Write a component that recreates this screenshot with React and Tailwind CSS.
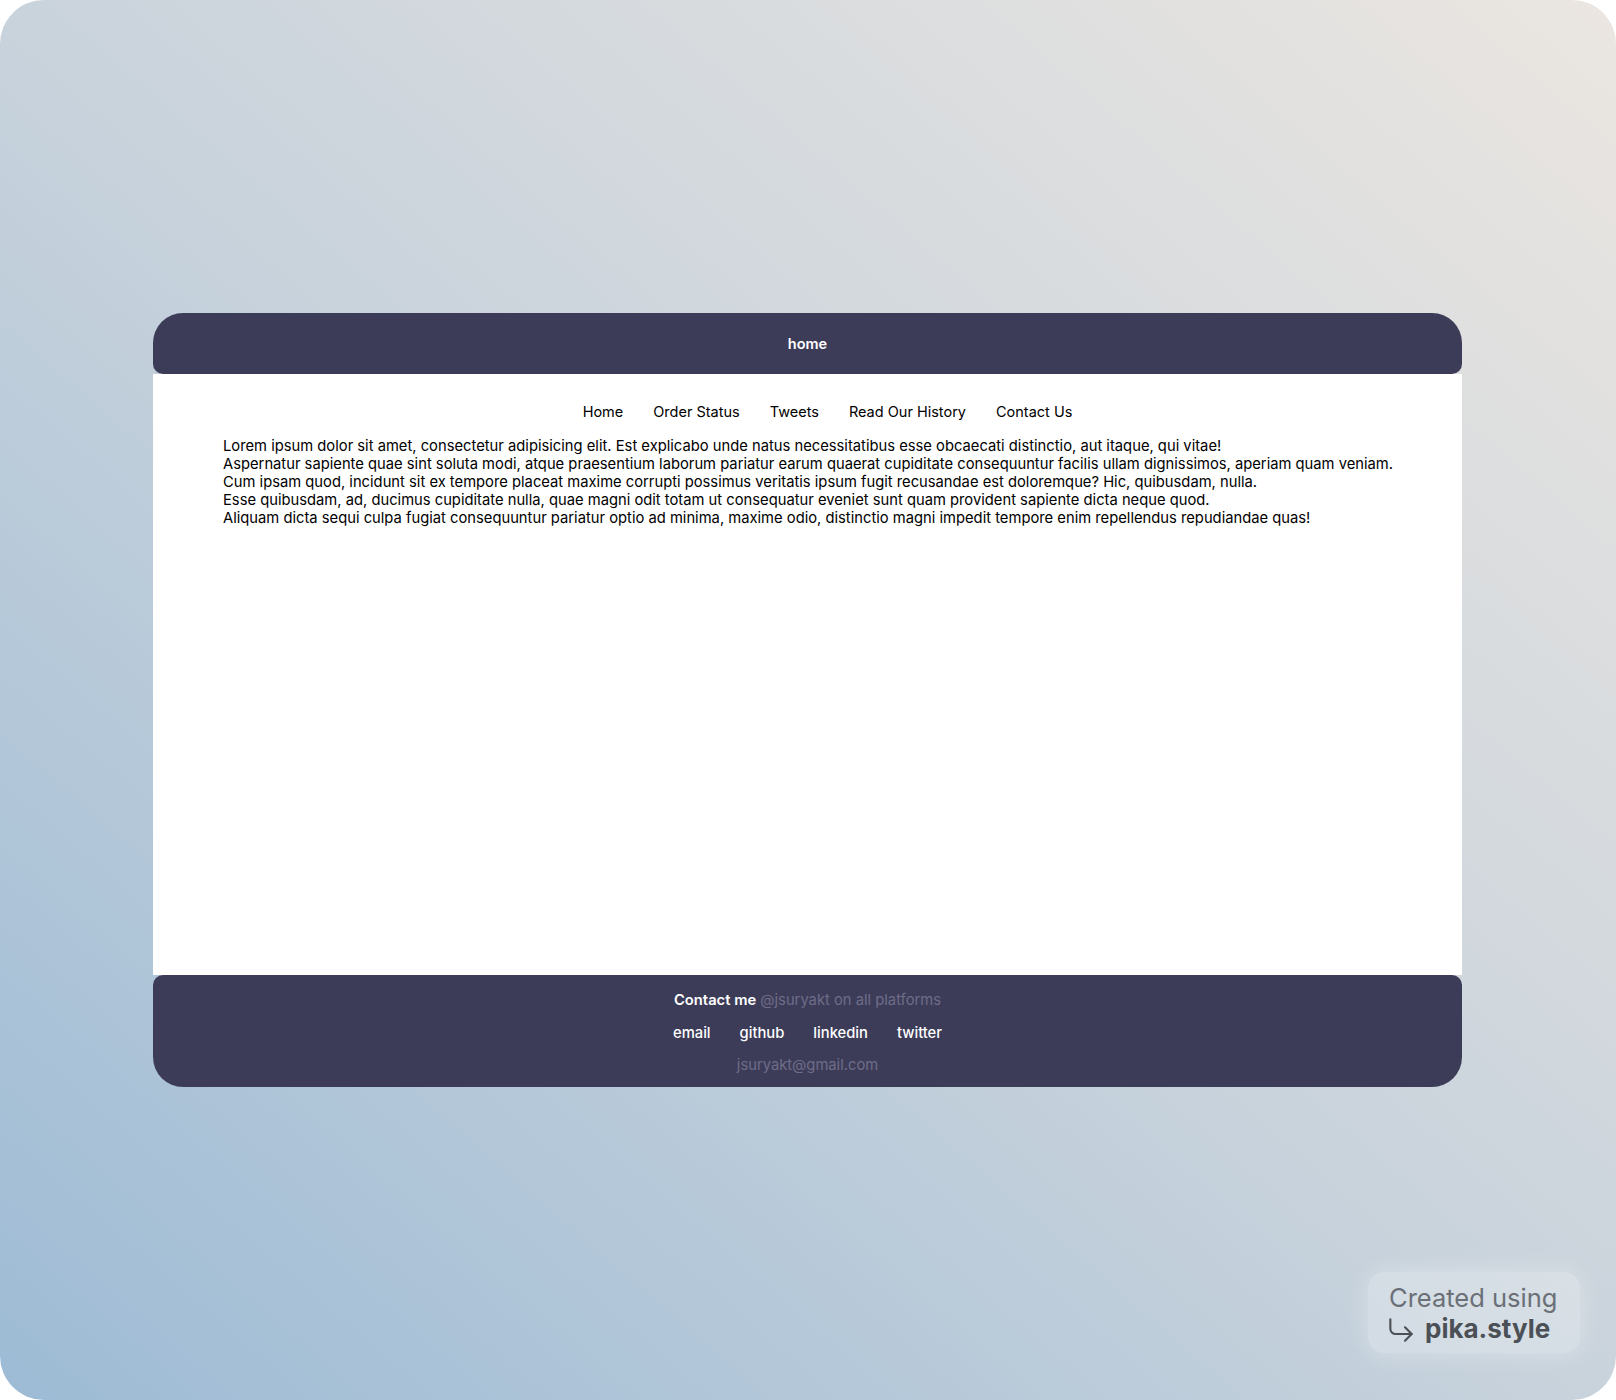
import React from "react";
import { CornerDownRight } from "lucide-react";

const navLinks = ["Home", "Order Status", "Tweets", "Read Our History", "Contact Us"];
const socials = ["email", "github", "linkedin", "twitter"];

const lorem = [
  "Lorem ipsum dolor sit amet, consectetur adipisicing elit. Est explicabo unde natus necessitatibus esse obcaecati distinctio, aut itaque, qui vitae!",
  "Aspernatur sapiente quae sint soluta modi, atque praesentium laborum pariatur earum quaerat cupiditate consequuntur facilis ullam dignissimos, aperiam quam veniam.",
  "Cum ipsam quod, incidunt sit ex tempore placeat maxime corrupti possimus veritatis ipsum fugit recusandae est doloremque? Hic, quibusdam, nulla.",
  "Esse quibusdam, ad, ducimus cupiditate nulla, quae magni odit totam ut consequatur eveniet sunt quam provident sapiente dicta neque quod.",
  "Aliquam dicta sequi culpa fugiat consequuntur pariatur optio ad minima, maxime odio, distinctio magni impedit tempore enim repellendus repudiandae quas!",
];

const App = () => {
  return (
    <div className="bg-white w-[1616px] h-[1400px] font-['Inter',sans-serif]">
      <div className="relative w-full h-full rounded-[44px] overflow-hidden bg-linear-to-tr from-[#9dbbd5] via-[#c9d3dc] to-[#ebe6e1] pt-[313px] pl-[153px]">
        {/* Page */}
        <div className="w-[1309px] flex flex-col">
          {/* Header */}
          <header className="h-[61px] bg-[#3d3c58] rounded-t-[30px] rounded-b-[10px] flex items-center justify-center">
            <span className="text-white text-[14.5px] font-semibold">home</span>
          </header>

          {/* Main */}
          <main className="bg-white h-[601px] pt-[28px]">
            <ul className="flex justify-center gap-[30px] pl-10 text-[14.5px] leading-5 text-black">
              {navLinks.map((l) => (
                <li key={l}>{l}</li>
              ))}
            </ul>
            <div className="mt-[15px] pl-[70px] text-[14.75px] leading-[18px] text-black">
              {lorem.map((line, i) => (
                <p key={i}>{line}</p>
              ))}
            </div>
          </main>

          {/* Footer */}
          <footer className="h-[112px] bg-[#3d3c58] rounded-t-[10px] rounded-b-[30px] pt-[15px] flex flex-col items-center gap-[12.5px] text-[14.75px] leading-5">
            <p>
              <span className="text-white font-semibold">Contact me</span>{" "}
              <span className="text-[#6e6c88]">@jsuryakt on all platforms</span>
            </p>
            <ul className="flex gap-[29px] text-white font-medium">
              {socials.map((s) => (
                <li key={s}>{s}</li>
              ))}
            </ul>
            <p className="text-[#6e6c88]">jsuryakt@gmail.com</p>
          </footer>
        </div>

        {/* pika badge */}
        <div className="absolute left-[1368px] top-[1272px] w-[212px] h-[81px] rounded-2xl bg-white/25 shadow-[0_0_24px_rgba(255,255,255,0.35)] pl-[21px] pt-[12px]">
          <p className="text-[25.5px] leading-[28px] text-[#6b7077]">Created using</p>
          <div className="flex items-center gap-[8px] text-[#4b5056]">
            <CornerDownRight className="w-[32px] h-[32px] -ml-[4px] mt-[2px]" strokeWidth={1.6} />
            <span className="text-[26px] leading-[28px] font-bold">pika.style</span>
          </div>
        </div>
      </div>
    </div>
  );
};

export default App;
